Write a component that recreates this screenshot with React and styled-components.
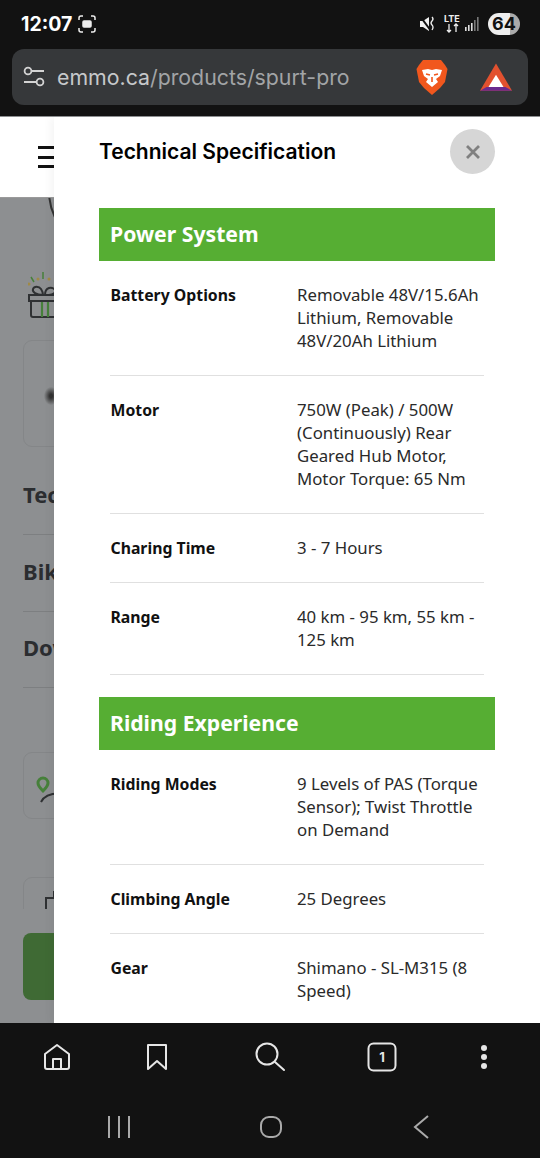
import React from "react";
import styled, { createGlobalStyle } from "styled-components";

const Global = createGlobalStyle`
  html, body { margin: 0; padding: 0; background: #121212; }
  body { width: 540px; height: 1158px; overflow: hidden; font-family: "Open Sans", "Noto Sans", sans-serif; }
`;
const Phone = styled.div`width:540px;height:1158px;display:flex;flex-direction:column;background:#121212;overflow:hidden;`;
const TopChrome = styled.header`height:116px;flex:none;display:flex;flex-direction:column;box-sizing:border-box;padding:0 12px 11px;`;
const StatusBar = styled.div`height:49px;flex:none;box-sizing:border-box;display:flex;align-items:center;justify-content:space-between;padding:0 8px 2px 9px;color:#fff;`;
const Time = styled.span`font:700 19.5px "Inter",sans-serif;margin-right:6px;`;
const Group = styled.div`display:flex;align-items:center;`;
const Battery = styled.div`width:32px;height:22px;border-radius:11px;margin-left:7px;background:linear-gradient(90deg,#eee 0 68%,#aaa 68%);color:#111;font:700 18px/22px "Inter",sans-serif;text-align:center;`;
const UrlBar = styled.div`height:56px;flex:none;box-sizing:border-box;border-radius:12px;background:#36383a;display:flex;align-items:center;padding:0 16px 0 11px;`;
const UrlText = styled.div`flex:1;margin-left:12px;font:400 21.3px "Inter",sans-serif;color:#c6c8ca;white-space:nowrap;`;
const Dim = styled.span`color:#a2a4a6;`;
const Viewport = styled.main`height:907px;flex:none;position:relative;overflow:hidden;background:#8d8f91;border-top:1px solid #8d8f91;box-sizing:border-box;`;
const Behind = styled.div`height:100%;display:flex;flex-direction:column;`;
const SiteHead = styled.div`height:81px;flex:none;background:#fff;display:flex;align-items:center;padding-left:38px;border-bottom:1px solid #9a9a9a;box-sizing:border-box;`;
const Burger = styled.div`width:18px;height:22px;flex:none;display:flex;flex-direction:column;justify-content:space-between;& i{display:block;height:3px;background:#111;}`;
const BehindBody = styled.div`flex:1;padding:0 23px;display:flex;flex-direction:column;position:relative;overflow:hidden;`;
const LogoArc = styled.div`position:absolute;left:48px;top:-67px;width:120px;height:120px;border:2px solid #333;border-radius:50%;box-sizing:border-box;`;
const Gift = styled.svg`display:block;margin:74px 0 0 5px;flex:none;`;
const GreyCard = styled.div`flex:none;margin-top:${p=>p.$mt}px;height:${p=>p.$h}px;border:1px solid #848688;border-radius:9px;box-sizing:border-box;position:relative;`;
const Smudge = styled.div`position:absolute;left:20px;top:46px;width:14px;height:18px;background:radial-gradient(#333 15%,transparent 72%);`;
const NavItem = styled.div`flex:none;box-sizing:border-box;border-bottom:1px solid #7d7f81;font:700 22px "Noto Sans",sans-serif;color:#2b2d30;white-space:nowrap;margin-top:${p=>p.$mt||0}px;height:${p=>p.$h}px;line-height:${p=>p.$h-5}px;`;
const Clip = styled.div`flex:none;height:32px;margin-top:58px;overflow:hidden;`;
const GreenBtn = styled.div`flex:none;margin-top:24px;height:67px;background:#3f6a34;border-radius:8px;`;
const Modal = styled.section`position:absolute;top:0;bottom:0;left:54px;right:0;background:#fff;box-sizing:border-box;padding:0 45px;overflow:hidden;box-shadow:-4px 0 8px rgba(0,0,0,.04);`;
const ModalHead = styled.div`height:91px;box-sizing:border-box;padding-bottom:22px;display:flex;align-items:center;justify-content:space-between;`;
const ModalTitle = styled.h2`margin:0;font:600 21px "Inter",sans-serif;color:#000;`;
const CloseBtn = styled.button`width:45px;height:45px;border-radius:50%;border:0;padding:0;background:#d6d6d6;display:flex;align-items:center;justify-content:center;`;
const SectionBar = styled.h3`margin:0;height:53px;background:#56ae33;color:#fff;font:700 21.2px/51px "Noto Sans",sans-serif;padding-left:11px;`;
const Rows = styled.div`padding:0 11px;margin-bottom:22px;`;
const Row = styled.div`display:grid;grid-template-columns:187px 1fr;padding:22px 0 23px;border-bottom:1px solid #e0e0e0;`;
const Label = styled.div`font:700 15.8px/23px "Noto Sans",sans-serif;color:#111;padding:1px 0 0 0.5px;margin-bottom:-1px;`;
const Value = styled.div`font:400 16.8px/23px "Noto Sans",sans-serif;color:#2a2a2a;`;
const BottomNav = styled.nav`height:135px;flex:none;display:flex;flex-direction:column;background:#121212;`;
const Tabs = styled.div`height:68px;flex:none;display:grid;grid-template-columns:100px 112px 113px 102px 30px;align-items:center;padding-left:42px;`;
const SysNav = styled.div`height:67px;flex:none;display:flex;justify-content:space-between;align-items:center;padding:5px 105px 0 107px;box-sizing:border-box;`;

const S = { fill:"none", stroke:"#e6e6e6", strokeWidth:2, strokeLinecap:"round", strokeLinejoin:"round" };

const specsA = [
  ["Battery Options","Removable 48V/15.6Ah Lithium, Removable 48V/20Ah Lithium"],
  ["Motor","750W (Peak) / 500W (Continuously) Rear Geared Hub Motor, Motor Torque: 65 Nm"],
  ["Charing Time","3 - 7 Hours"],
  ["Range","40 km - 95 km, 55 km - 125 km"],
];
const specsB = [
  ["Riding Modes","9 Levels of PAS (Torque Sensor); Twist Throttle on Demand"],
  ["Climbing Angle","25 Degrees"],
  ["Gear","Shimano - SL-M315 (8 Speed)"],
];

const SpecRows = ({items}) => (
  <Rows>{items.map(([l,v])=>(<Row key={l}><Label>{l}</Label><Value>{v}</Value></Row>))}</Rows>
);

export default function App(){
  return (<Phone><Global/>
    <TopChrome>
      <StatusBar>
        <Group><Time>12:07</Time>
          <svg width="18" height="18" viewBox="0 0 18 18" fill="none" stroke="#eee" strokeWidth="1.5"><path d="M1 5V3a2 2 0 0 1 2-2h2M13 1h2a2 2 0 0 1 2 2v2M17 13v2a2 2 0 0 1-2 2h-2M5 17H3a2 2 0 0 1-2-2v-2"/><rect x="5" y="6" width="8" height="6" rx="1" fill="#eee"/></svg>
        </Group>
        <Group>
          <svg width="16" height="18" viewBox="0 0 16 18"><path d="M0 6h3l6-4v14l-6-4H0z" fill="#f2f2f2"/><path d="M0 1l11 15" stroke="#121212" strokeWidth="2"/><path d="M12 2q2 2 0 4t0 4 0 5" stroke="#eee" strokeWidth="1.3" fill="none"/></svg>
          <svg width="18" height="20" viewBox="0 0 18 20" style={{marginLeft:8}}><text x="0" y="8" fontSize="9" fontWeight="700" fontFamily="Inter" fill="#eee">LTE</text><path d="M5 10v8M3 16l2 2 2-2M12 18v-8M10 12l2-2 2 2" stroke="#eee" strokeWidth="1.3" fill="none"/></svg>
          <svg width="16" height="16" viewBox="0 0 16 16" style={{marginLeft:3}}><g fill="#ddd"><rect x="0" y="11" width="1.6" height="4"/><rect x="3" y="9" width="1.6" height="6"/><rect x="6" y="7" width="1.6" height="8"/></g><g fill="#777"><rect x="9" y="4" width="1.6" height="11"/><rect x="12" y="1" width="1.6" height="14"/></g></svg>
          <Battery>64</Battery>
        </Group>
      </StatusBar>
      <UrlBar>
        <svg width="22" height="22" viewBox="0 0 22 22" fill="none" stroke="#d4d4d4" strokeWidth="1.8"><circle cx="5" cy="5" r="3.4"/><path d="M9 5h12M1 16h12"/><circle cx="17" cy="16" r="3.4"/></svg>
        <UrlText>emmo.ca<Dim>/products/spurt-pro</Dim></UrlText>
        <svg width="32" height="37" viewBox="0 0 32 37"><path d="M7 1h18l4 5 2.5 4-2.5 13-5 6-8 7-8-7-5-6L.5 10 3 6z" fill="#f1571d"/><path d="M6 11l6-1 4 1 4-1 6 1-2 6-4 3 2 3-6 5-6-5 2-3-4-3z" fill="#fff"/><path d="M10 15l4 1M22 15l-4 1M16 18v5" stroke="#f1571d" strokeWidth="1.6"/></svg>
        <svg width="32" height="29" viewBox="0 0 34 30" style={{marginLeft:32}}><path d="M17 0L34 29H0z" fill="#e2512f"/><path d="M0 29l7-4h20l7 4z" fill="#6a2a8e"/><path d="M17 12l8 13H9z" fill="#fff"/></svg>
      </UrlBar>
    </TopChrome>
    <Viewport>
      <Behind>
        <SiteHead><Burger><i/><i/><i/></Burger></SiteHead>
        <BehindBody>
          <LogoArc/>
          <Gift width="34" height="46" viewBox="0 0 34 46" fill="none">
            <path d="M1 23h32v6H1zM3 29v14a2 2 0 0 0 2 2h28" stroke="#2f3133" strokeWidth="2"/>
            <path d="M15 23c-7 0-11-3-10-6s6-3 8 0 2 4 2 6M17 23c0-3 1-6 4-7s7 1 6 4-5 3-10 3" stroke="#2f3133" strokeWidth="2"/>
            <path d="M14 30v15M20 30v15" stroke="#46803a" strokeWidth="2.2"/>
            <path d="M15 0v7M3 5l3 5" stroke="#46803a" strokeWidth="1.5"/>
            <circle cx="1" cy="12" r="1.5" fill="#a08a45"/><circle cx="10" cy="7" r="1.5" fill="#a08a45"/><circle cx="21" cy="7" r="1.5" fill="#a08a45"/>
          </Gift>
          <GreyCard $mt={22} $h={107}><Smudge/></GreyCard>
          <NavItem $mt={11} $h={77}>Technical</NavItem>
          <NavItem $h={77}>Bike</NavItem>
          <NavItem $h={76}>Downloads</NavItem>
          <GreyCard $mt={64} $h={67}>
            <svg width="50" height="30" viewBox="0 0 50 30" style={{position:"absolute",left:11,top:23}} fill="none"><path d="M8 2a5 5 0 0 1 5 5c0 3-5 8-5 8s-5-5-5-8a5 5 0 0 1 5-5z" stroke="#46803a" strokeWidth="3"/><path d="M6 26c3-6 10-10 25-8" stroke="#2f3133" strokeWidth="2"/></svg>
          </GreyCard>
          <Clip>
            <GreyCard $mt={0} $h={67}>
              <svg width="40" height="30" viewBox="0 0 40 30" style={{position:"absolute",left:21,top:12}} fill="none"><path d="M1 20V8h12M9 8V2h16" stroke="#2f3133" strokeWidth="2"/></svg>
            </GreyCard>
          </Clip>
          <GreenBtn/>
        </BehindBody>
      </Behind>
      <Modal>
        <ModalHead>
          <ModalTitle>Technical Specification</ModalTitle>
          <CloseBtn aria-label="Close"><svg width="16" height="16" viewBox="0 0 16 16"><path d="M2 2l12 12M14 2L2 14" stroke="#808080" strokeWidth="2.8"/></svg></CloseBtn>
        </ModalHead>
        <SectionBar>Power System</SectionBar>
        <SpecRows items={specsA}/>
        <SectionBar>Riding Experience</SectionBar>
        <SpecRows items={specsB}/>
      </Modal>
    </Viewport>
    <BottomNav>
      <Tabs>
        <svg width="30" height="30" viewBox="0 0 30 30" {...S}><path d="M3 12L15 3l12 9v13a2 2 0 0 1-2 2H5a2 2 0 0 1-2-2z"/><path d="M11 27V17h8v10"/></svg>
        <svg width="30" height="30" viewBox="0 0 30 30" {...S}><path d="M6 3h18v24l-9-8-9 8z"/></svg>
        <svg width="32" height="32" viewBox="0 0 32 32" {...S}><circle cx="13" cy="13" r="10.5"/><path d="M21 21l9 8"/></svg>
        <svg width="30" height="30" viewBox="0 0 30 30" {...S}><rect x="1.5" y="1.5" width="27" height="27" rx="5"/><text x="15" y="20" textAnchor="middle" fontSize="13" fontWeight="700" fontFamily="Inter" fill="#e6e6e6" stroke="none">1</text></svg>
        <svg width="30" height="30" viewBox="0 0 30 30"><g fill="#e6e6e6"><circle cx="15" cy="6" r="3"/><circle cx="15" cy="15" r="3"/><circle cx="15" cy="24" r="3"/></g></svg>
      </Tabs>
      <SysNav>
        <svg width="24" height="24" viewBox="0 0 24 24" stroke="#aaa" strokeWidth="2"><path d="M2 1v22M12 1v22M22 1v22"/></svg>
        <svg width="24" height="24" viewBox="0 0 24 24" fill="none" stroke="#aaa" strokeWidth="2"><rect x="2" y="2" width="20" height="20" rx="8"/></svg>
        <svg width="24" height="24" viewBox="0 0 24 24" fill="none" stroke="#aaa" strokeWidth="2"><path d="M17 1L4 12l13 11"/></svg>
      </SysNav>
    </BottomNav>
  </Phone>);
}
